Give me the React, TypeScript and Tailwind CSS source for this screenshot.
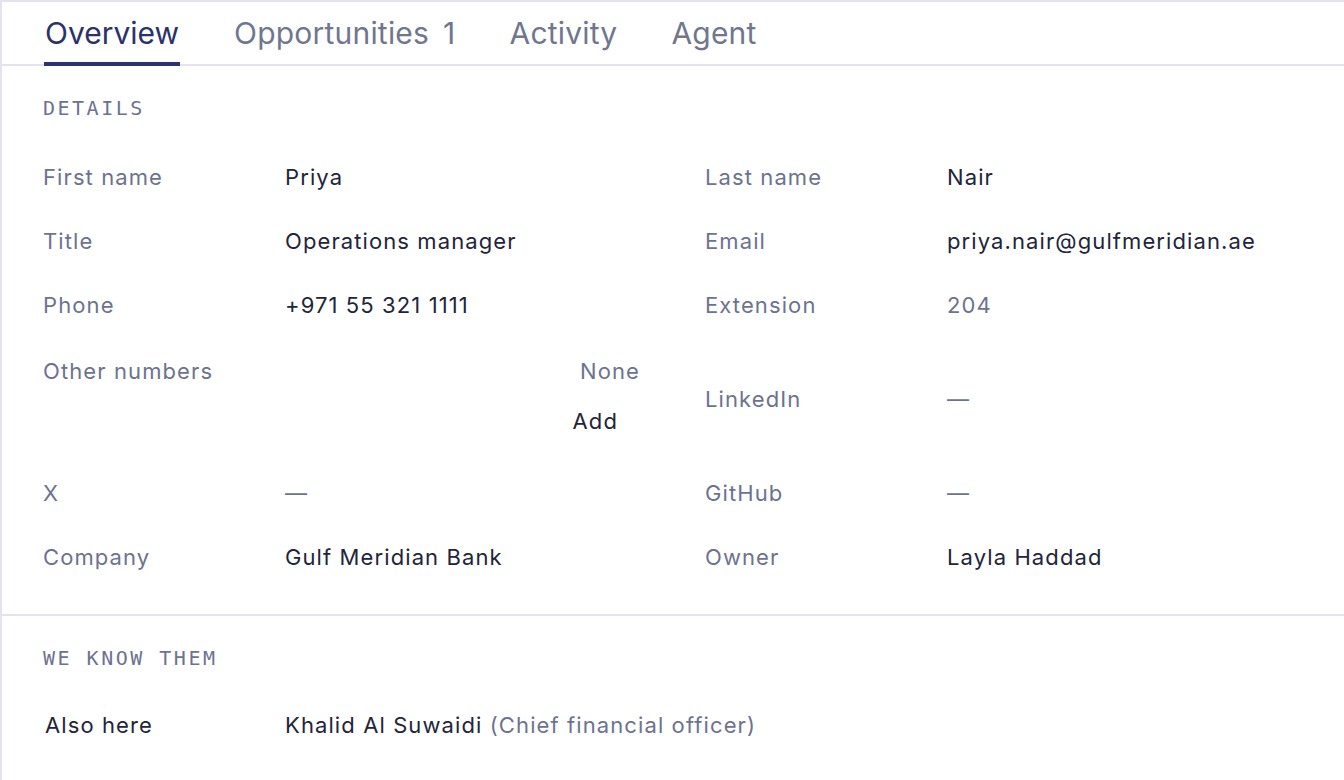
import React from "react";

const label = "text-[#6d7290]";
const value = "text-[#22253a]";

function Row({ l1, v1, l2, v2, v1c, v2c }: { l1: string; v1: React.ReactNode; l2: string; v2: React.ReactNode; v1c?: string; v2c?: string }) {
  return (
    <div className="grid grid-cols-2 gap-x-[65px] h-16 items-center">
      <div className="grid grid-cols-[242px_1fr] items-center">
        <div className={label}>{l1}</div>
        <div className={v1c ?? value}>{v1}</div>
      </div>
      <div className="grid grid-cols-[242px_1fr] items-center">
        <div className={label}>{l2}</div>
        <div className={v2c ?? value}>{v2}</div>
      </div>
    </div>
  );
}

const mono = { fontFamily: "'DejaVu Sans Mono', 'Liberation Mono', monospace" };

export default function App() {
  return (
    <div
      className="w-[1344px] h-[780px] bg-white border-l-2 border-t-2 border-[#e4e4ef] overflow-hidden text-[22px] leading-8 tracking-[1.1px]"
      style={{ fontFamily: "Inter, 'Noto Sans', sans-serif" }}
    >
      <div className="flex gap-[54px] pl-[42px] h-[64px] border-b-2 border-[#e4e4ef] text-[30px] tracking-[0.2px]">
        <div className="relative flex items-center text-[#2b316b] px-[1px] tracking-normal">
          Overview
          <div className="absolute left-0 right-0 -bottom-[2px] h-[4px] bg-[#2b3370]" />
        </div>
        <div className="flex items-center text-[#71768f]">
          Opportunities<span className="ml-[14px]">1</span>
        </div>
        <div className="flex items-center text-[#71768f]">Activity</div>
        <div className="flex items-center text-[#71768f]">Agent</div>
      </div>

      <div className="pl-[41px] pr-[42px] pt-[28px] pb-[25px] border-b-2 border-[#e4e4ef]">
        <div className="text-[20px] leading-7 tracking-[2.5px] text-[#6d7290] mb-[23px]" style={mono}>
          DETAILS
        </div>
        <Row l1="First name" v1="Priya" l2="Last name" v2="Nair" />
        <Row l1="Title" v1="Operations manager" l2="Email" v2="priya.nair@gulfmeridian.ae" />
        <Row l1="Phone" v1="+971 55 321 1111" l2="Extension" v2="204" v2c={label} />
        <div className="grid grid-cols-2 gap-x-[65px] h-[124px]">
          <div className="grid grid-cols-[242px_1fr]">
            <div className={`${label} pt-[18px]`}>Other numbers</div>
            <div className="flex flex-col items-end pt-[18px]">
              <div className={label}>None</div>
              <button className={`${value} mt-[18px] pr-[22px] leading-8 tracking-[1.1px]`}>Add</button>
            </div>
          </div>
          <div className="grid grid-cols-[242px_1fr] items-center">
            <div className={label}>LinkedIn</div>
            <div className={label}>—</div>
          </div>
        </div>
        <Row l1="X" v1="—" v1c={label} l2="GitHub" v2="—" v2c={label} />
        <Row l1="Company" v1="Gulf Meridian Bank" l2="Owner" v2="Layla Haddad" />
      </div>

      <div className="pl-[41px] pr-[42px] pt-[28px]">
        <div className="text-[20px] leading-7 tracking-[2.5px] text-[#6d7290] mb-[21px]" style={mono}>
          WE KNOW THEM
        </div>
        <div className="grid grid-cols-[242px_1fr] h-16 items-center">
          <div className={`${value} pl-[2px]`}>Also here</div>
          <div className={value}>
            Khalid Al Suwaidi <span className={label}>(Chief financial officer)</span>
          </div>
        </div>
      </div>
    </div>
  );
}
